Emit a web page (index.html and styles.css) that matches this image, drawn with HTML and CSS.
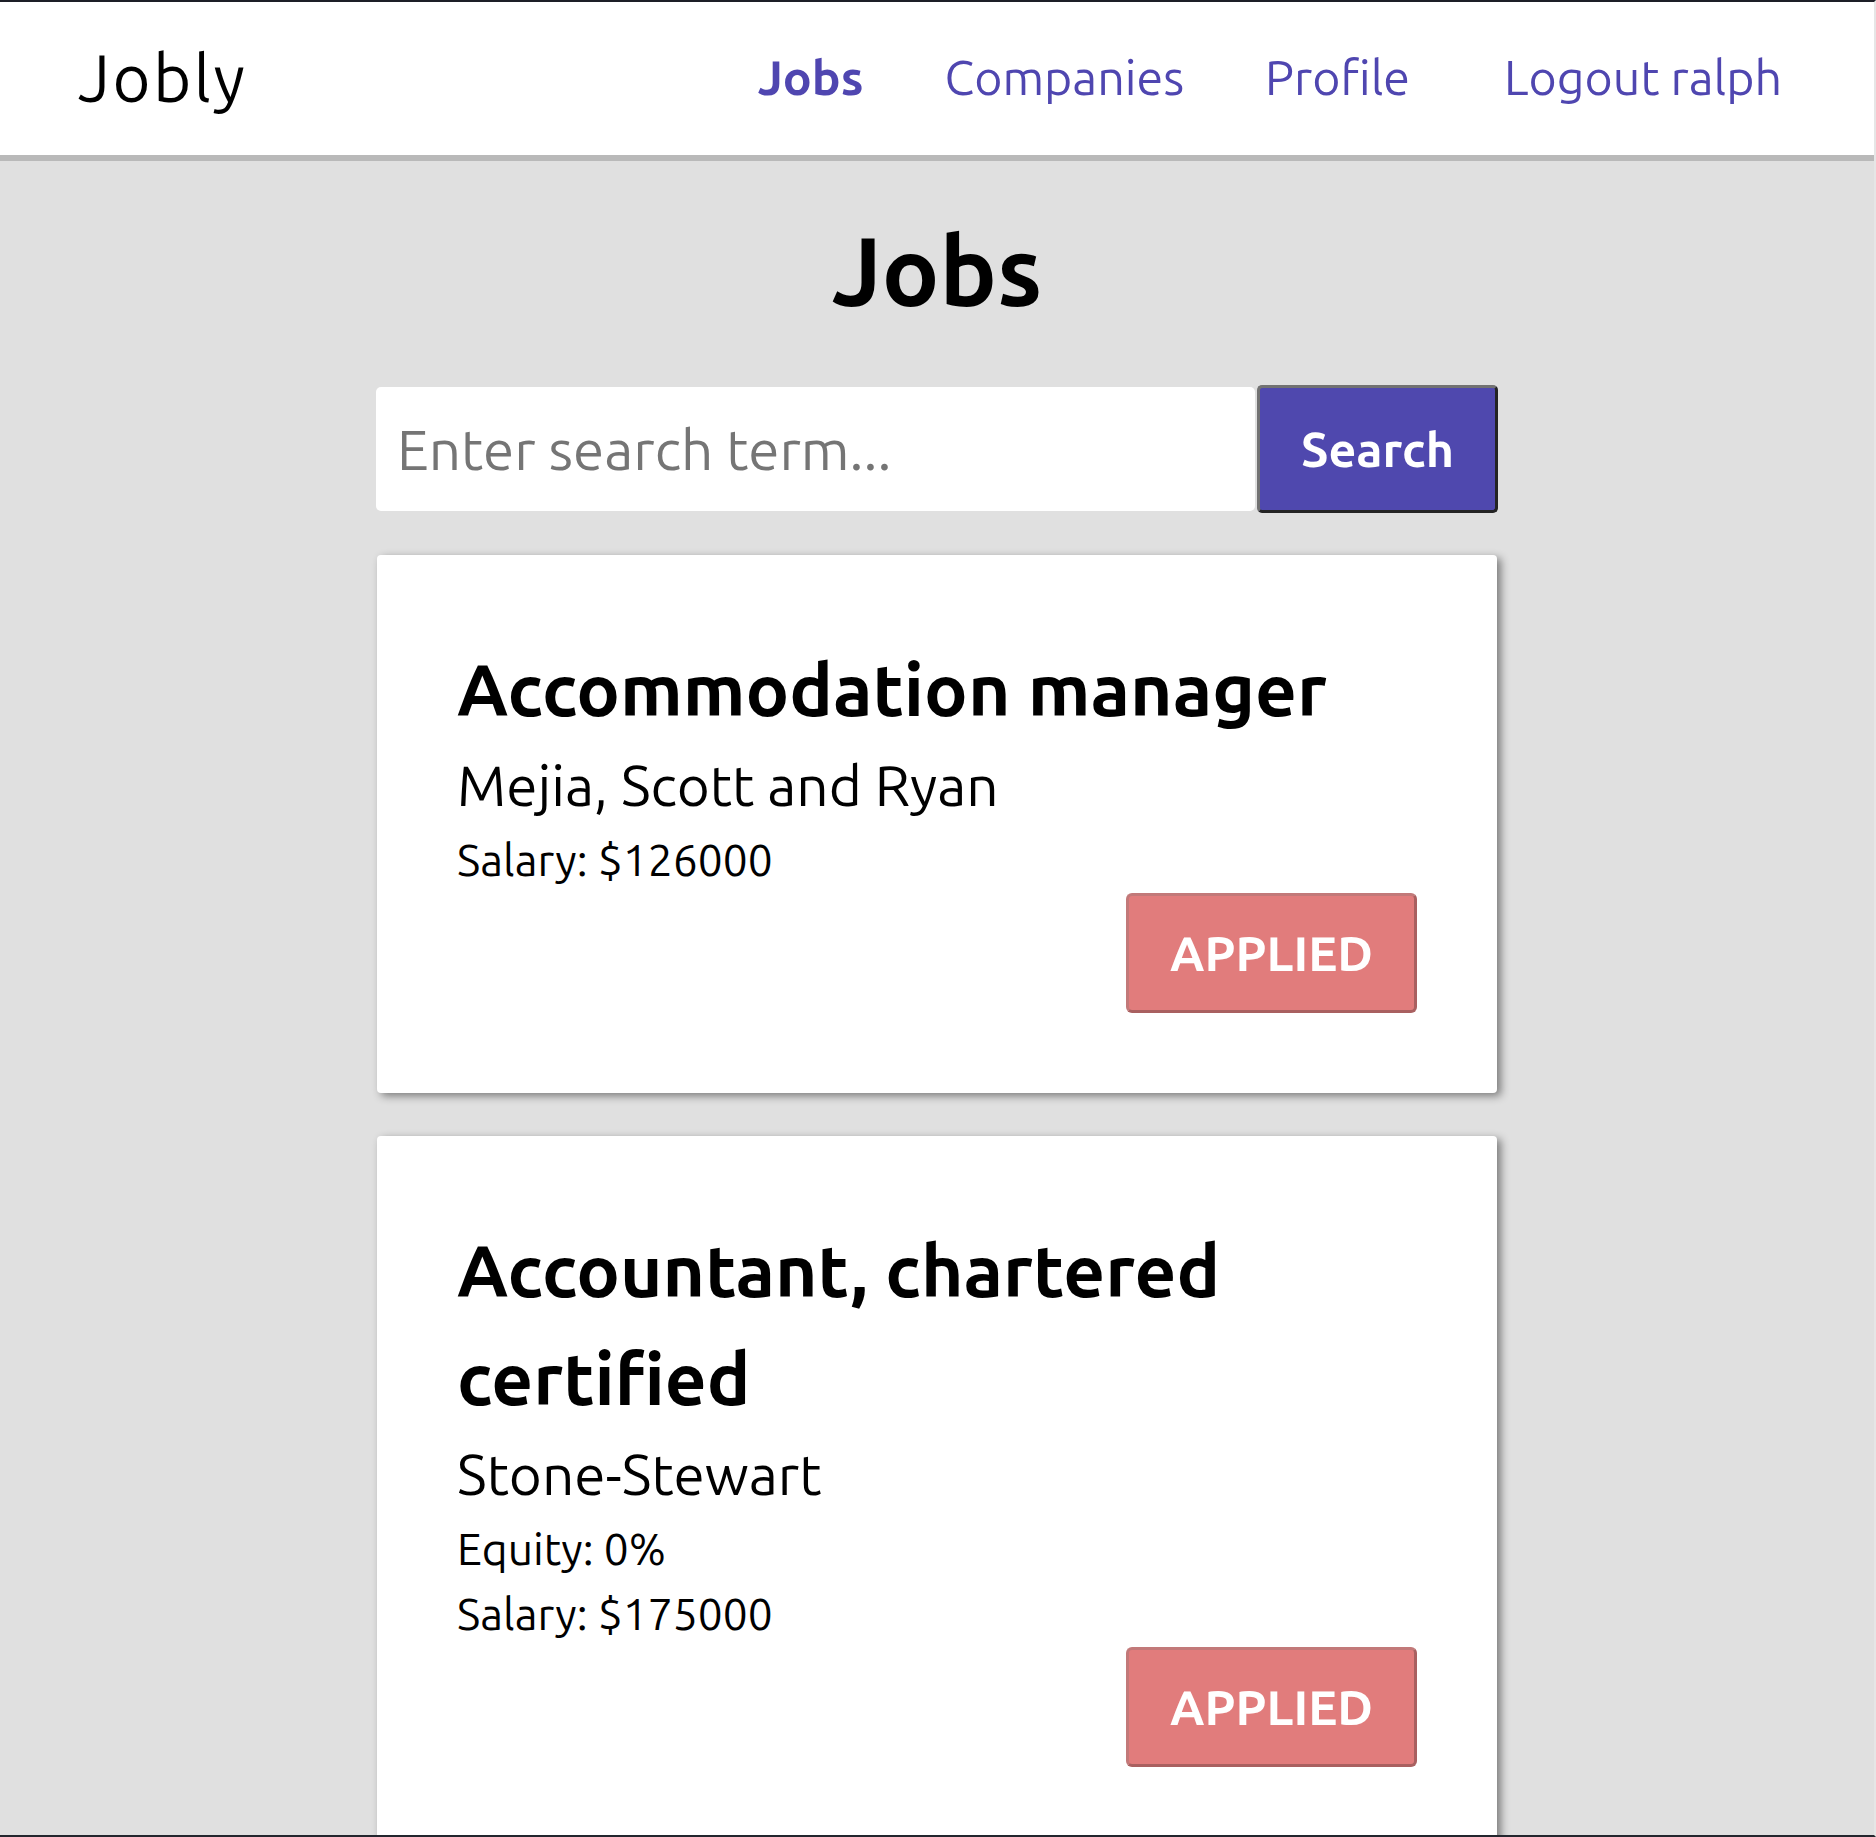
FILE: index.html
```html
<!DOCTYPE html>
<html lang="en">
<head>
<meta charset="utf-8">
<title>Jobly</title>
<link rel="stylesheet" href="styles.css">
</head>
<body>
<div class="frame"></div>
<nav class="navbar">
  <a class="brand" href="#">Jobly</a>
  <div class="nav-links">
    <a class="nav-link active" href="#">Jobs</a>
    <a class="nav-link" href="#">Companies</a>
    <a class="nav-link" href="#">Profile</a>
    <a class="nav-link logout" href="#">Logout ralph</a>
  </div>
</nav>
<main class="page">
  <h1 class="page-title">Jobs</h1>
  <form class="search">
    <input class="search-input" type="text" placeholder="Enter search term...">
    <button class="search-btn" type="button">Search</button>
  </form>
  <div class="job-list">
    <div class="card">
      <h3 class="job-title">Accommodation manager</h3>
      <p class="company">Mejia, Scott and Ryan</p>
      <p class="detail">Salary: $126000</p>
      <button class="apply-btn" type="button">APPLIED</button>
    </div>
    <div class="card">
      <h3 class="job-title">Accountant, chartered certified</h3>
      <p class="company">Stone-Stewart</p>
      <p class="detail">Equity: 0%</p>
      <p class="detail">Salary: $175000</p>
      <button class="apply-btn" type="button">APPLIED</button>
    </div>
  </div>
</main>
</body>
</html>
```

FILE: styles.css
```css
html {
  scrollbar-width: none;
}

body {
  margin: 0 2px 0 0;
  background: #e0e0e0;
  color: #000;
  font-family: "Ubuntu", "Noto Sans", sans-serif;
  line-height: 1.5;
}

.frame {
  position: fixed;
  inset: 0;
  border-top: 2px solid #1d1f27;
  border-bottom: 2px solid #23262e;
  border-right: 2px solid #e6e6e6;
  pointer-events: none;
  z-index: 10;
}

.navbar {
  display: flex;
  align-items: center;
  justify-content: space-between;
  height: 155px;
  padding: 0 92px 0 78px;
  background: #fff;
  border-bottom: 6px solid #b9b9b9;
}

.brand {
  font-size: 65px;
  letter-spacing: 2.6px;
  line-height: 1.5;
  color: #000;
  text-decoration: none;
}

.nav-links {
  display: flex;
  align-items: center;
  gap: 81px;
}

.nav-link {
  font-size: 48.3px;
  line-height: 1.5;
  color: #4f46b0;
  text-decoration: none;
}

.nav-link.active {
  font-weight: 700;
}

.nav-link.logout {
  margin-left: 13px;
}

.page {
  width: 1122px;
  margin: 0 auto;
  display: flex;
  flex-direction: column;
}

.page-title {
  margin: 38px 0 42px;
  font-size: 96px;
  line-height: 144px;
  font-weight: 700;
  text-align: center;
}

.search {
  display: flex;
  align-items: center;
  gap: 2px;
  margin: 0 0 42px;
}

.search-input {
  width: 879px;
  height: 124px;
  box-sizing: border-box;
  border: none;
  border-radius: 5px;
  padding: 0 21px;
  background: #fff;
  font-family: inherit;
  font-size: 56.5px;
  color: #000;
  outline: none;
}

.search-input::placeholder {
  color: #757575;
}

.search-btn {
  width: 241px;
  height: 128px;
  box-sizing: border-box;
  padding: 0;
  border: 3px solid;
  border-color: #727272 #242424 #242424 #727272;
  border-radius: 5px;
  background: #4f48ae;
  color: #fff;
  font-family: inherit;
  font-size: 48.4px;
  font-weight: 700;
  line-height: 72px;
}

.job-list {
  display: flex;
  flex-direction: column;
  gap: 43px;
  padding: 0 1px 40px;
}

.card {
  display: flex;
  flex-direction: column;
  padding: 80px;
  background: #fff;
  border-radius: 4px;
  box-shadow: 4px 3px 8px rgba(0, 0, 0, 0.45);
}

.job-title {
  margin: 0;
  font-size: 72.8px;
  line-height: 108px;
  font-weight: 700;
}

.company {
  margin: 0;
  font-size: 56.6px;
  line-height: 84px;
}

.detail {
  margin: 0;
  font-size: 44.3px;
  line-height: 65px;
}

.apply-btn {
  align-self: flex-end;
  width: 291px;
  box-sizing: border-box;
  margin-top: 1px;
  padding: 21px 0;
  border: 3px solid;
  border-color: #c27979 #a96060 #a96060 #c27979;
  border-radius: 6px;
  background: #e17c7c;
  color: #fff;
  font-family: inherit;
  font-size: 49px;
  font-weight: 700;
  line-height: 72px;
}
```
